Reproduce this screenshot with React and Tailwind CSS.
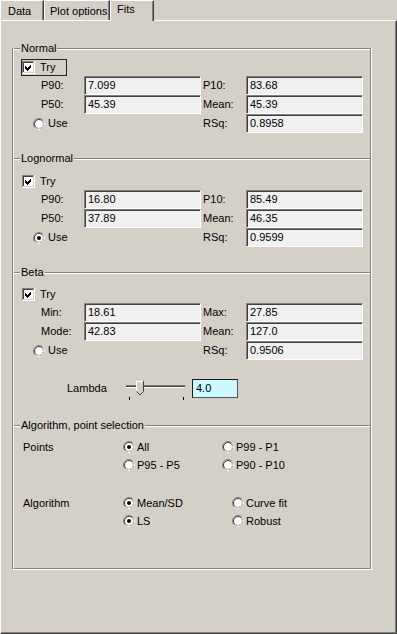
import React from "react";

function Check() {
  return (
    <svg width="13" height="13" viewBox="0 0 13 13" className="block shrink-0" shapeRendering="crispEdges">
      <rect x="0" y="0" width="13" height="13" fill="#ffffff" />
      <path d="M0.5 12V0.5H12" stroke="#808080" fill="none" />
      <path d="M1.5 11V1.5H11" stroke="#404040" fill="none" />
      <path d="M1.5 11.5H11.5V1" stroke="#d4d0c8" fill="none" />
      <path d="M0 12.5H12.5V0" stroke="#ffffff" fill="none" />
      <polygon points="3,5 5,7 9,3 9,6 5,10 3,8" fill="#000000" />
    </svg>
  );
}

function Radio({ on }) {
  return (
    <svg width="12" height="12" viewBox="0 0 12 12" className="block shrink-0">
      <circle cx="6" cy="6" r="5.5" fill="none" stroke="#808080" />
      <path d="M9.89 2.11A5.5 5.5 0 0 1 2.11 9.89" fill="none" stroke="#ffffff" />
      <circle cx="6" cy="6" r="4.5" fill="#ffffff" stroke="#404040" />
      <path d="M9.18 2.82A4.5 4.5 0 0 1 2.82 9.18" fill="none" stroke="#d4d0c8" />
      {on && <circle cx="6" cy="6" r="2" fill="#000000" />}
    </svg>
  );
}

function Field({ v }) {
  return (
    <div className="h-[19px] w-[117px] border border-[#808080] border-r-white border-b-white bg-[#f0f0f0] pl-[3px] leading-[17px] text-black shadow-[inset_1px_1px_0_#404040]">
      {v}
    </div>
  );
}

function Header({ label }) {
  return (
    <div className="relative h-[2px] border-t border-b border-t-[#808080] border-b-white">
      <span className="absolute left-[6px] top-[-7px] bg-[#d4d0c8] px-[1px] leading-[13px]">{label}</span>
    </div>
  );
}

function Row({ l1, v1, l2, v2 }) {
  return (
    <div className="flex h-[19px]">
      <div className="flex w-[70px] items-center pl-[27px]">{l1}</div>
      <Field v={v1} />
      <div className="flex w-[45px] items-center pl-[2px]">{l2}</div>
      <Field v={v2} />
    </div>
  );
}

function UseRow({ on, l2, v2 }) {
  return (
    <div className="flex h-[19px]">
      <div className="flex w-[187px] items-center gap-[3px] pl-[19px]">
        <Radio on={on} />
        <span>Use</span>
      </div>
      <div className="flex w-[45px] items-center pl-[2px]">{l2}</div>
      <Field v={v2} />
    </div>
  );
}

function Opt({ on, children, w }) {
  return (
    <div className={"flex items-center gap-[2px] " + (w || "")}>
      <Radio on={on} />
      <span>{children}</span>
    </div>
  );
}

export default function App() {
  return (
    <div className="h-[634px] w-[397px] overflow-hidden bg-[#d4d0c8] font-['Liberation_Sans',Arial,sans-serif] text-[11px] text-black">
      {/* tabs */}
      <div className="flex h-[20px] items-start">
        <div className="h-[20px] w-[44px] border-t border-l border-r border-t-white border-l-white border-r-[#404040] pl-[7px] pt-[4px] leading-[13px] shadow-[inset_-1px_0_0_#808080]">
          Data
        </div>
        <div className="h-[20px] w-[66px] border-t border-l border-r border-t-white border-l-white border-r-[#404040] pl-[5px] pt-[4px] leading-[13px] shadow-[inset_-1px_0_0_#808080]">
          Plot options
        </div>
        <div className="relative z-10 h-[21px] w-[44px] border-t border-l border-r border-t-white border-l-white border-r-[#404040] bg-[#d4d0c8] pl-[6px] pt-[2px] leading-[13px] shadow-[inset_-1px_0_0_#808080]">
          Fits
        </div>
      </div>

      {/* panel */}
      <div className="h-[614px] w-[397px] border border-t-white border-l-white border-r-[#404040] border-b-[#404040]">
        <div className="h-full border-r border-b border-r-[#808080] border-b-[#808080] pt-[27px]">
          <div className="ml-[11px] w-[360px] border-l border-r border-b border-l-[#808080] border-r-white border-b-white">
            <div className="border-l border-r border-b border-l-white border-r-[#808080] border-b-[#808080] pb-[38px]">
              {/* Normal */}
              <Header label="Normal" />
              <div className="ml-[7px] mt-[9px] flex h-[17px] w-[46px] items-center gap-[5px] border border-[#202020]">
                <Check />
                <span>Try</span>
              </div>
              <Row l1="P90:" v1="7.099" l2="P10:" v2="83.68" />
              <Row l1="P50:" v1="45.39" l2="Mean:" v2="45.39" />
              <UseRow l2="RSq:" v2="0.8958" />

              {/* Lognormal */}
              <div className="mt-[25px]">
                <Header label="Lognormal" />
              </div>
              <div className="ml-[8px] mt-[13px] flex h-[17px] items-center gap-[5px]">
                <Check />
                <span>Try</span>
              </div>
              <Row l1="P90:" v1="16.80" l2="P10:" v2="85.49" />
              <Row l1="P50:" v1="37.89" l2="Mean:" v2="46.35" />
              <UseRow on l2="RSq:" v2="0.9599" />

              {/* Beta */}
              <div className="mt-[25px]">
                <Header label="Beta" />
              </div>
              <div className="ml-[8px] mt-[12px] flex h-[17px] items-center gap-[5px]">
                <Check />
                <span>Try</span>
              </div>
              <Row l1="Min:" v1="18.61" l2="Max:" v2="27.85" />
              <Row l1="Mode:" v1="42.83" l2="Mean:" v2="127.0" />
              <UseRow l2="RSq:" v2="0.9506" />

              <div className="mt-[19px] flex h-[19px] items-center">
                <div className="w-[112px] pl-[53px]">Lambda</div>
                <svg width="62" height="19" viewBox="0 0 62 19" className="block shrink-0 overflow-visible" shapeRendering="crispEdges">
                  <line x1="0" y1="6.5" x2="59" y2="6.5" stroke="#808080" />
                  <line x1="0" y1="7.5" x2="59" y2="7.5" stroke="#404040" />
                  <line x1="0" y1="8.5" x2="59" y2="8.5" stroke="#ffffff" />
                  <polygon points="10,2 18,2 18,12 14,16 10,12" fill="#d4d0c8" />
                  <path d="M10.5 12V2.5H17" stroke="#ffffff" fill="none" />
                  <path d="M17.5 2V12.5L14 16L10.5 12.5" stroke="#404040" fill="none" shapeRendering="auto" />
                  <line x1="3.5" y1="18" x2="3.5" y2="21" stroke="#000000" />
                  <line x1="57.5" y1="18" x2="57.5" y2="21" stroke="#000000" />
                </svg>
                <div className="ml-[4px] h-[19px] w-[46px] border border-[#1a1a1a] border-r-[#555555] border-b-[#555555] bg-[#ccf8ff] pl-[3px] leading-[17px]">
                  4.0
                </div>
              </div>

              {/* Algorithm */}
              <div className="mt-[27px]">
                <Header label="Algorithm, point selection" />
              </div>
              <div className="mt-[11px] flex h-[18px] items-center">
                <div className="w-[109px] pl-[9px]">Points</div>
                <Opt on w="w-[99px]">All</Opt>
                <Opt>P99 - P1</Opt>
              </div>
              <div className="flex h-[18px] items-center">
                <div className="w-[109px]" />
                <Opt w="w-[99px]">P95 - P5</Opt>
                <Opt>P90 - P10</Opt>
              </div>
              <div className="mt-[20px] flex h-[18px] items-center">
                <div className="w-[109px] pl-[9px]">Algorithm</div>
                <Opt on w="w-[109px]">Mean/SD</Opt>
                <Opt>Curve fit</Opt>
              </div>
              <div className="flex h-[18px] items-center">
                <div className="w-[109px]" />
                <Opt on w="w-[109px]">LS</Opt>
                <Opt>Robust</Opt>
              </div>
            </div>
          </div>
        </div>
      </div>
    </div>
  );
}
